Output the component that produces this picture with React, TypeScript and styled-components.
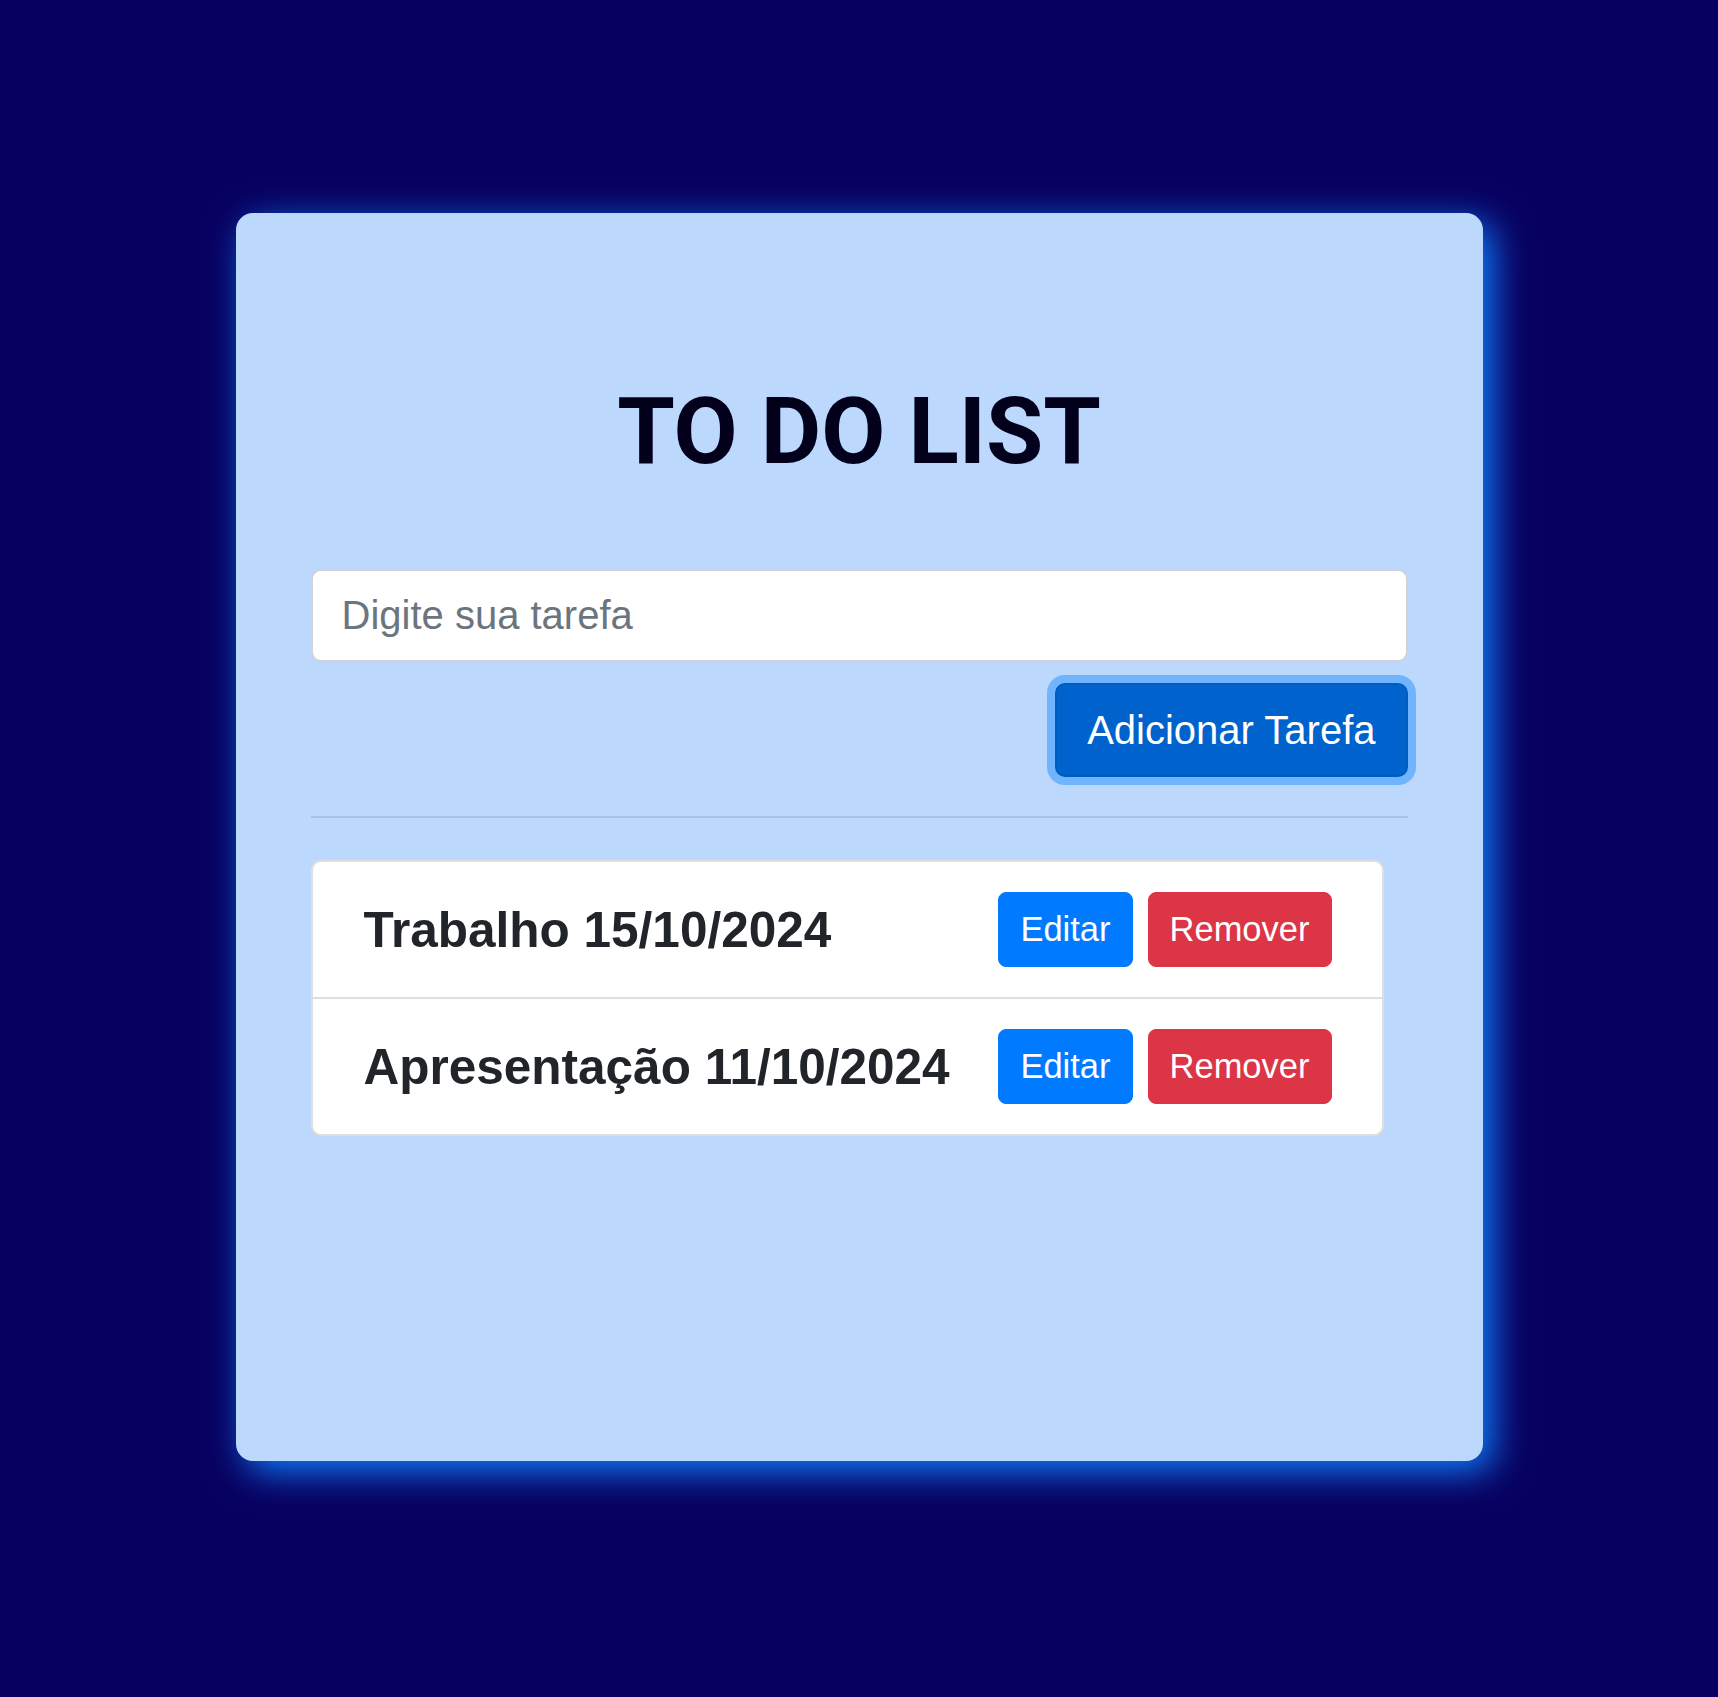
import React from "react";
import styled, { createGlobalStyle } from "styled-components";

const GlobalStyle = createGlobalStyle`
  html, body {
    margin: 0;
    padding: 0;
    background: #080060;
    font-family: "Liberation Sans", Arial, sans-serif;
  }
  * { box-sizing: border-box; }
`;

const Page = styled.main`
  min-height: 1697px;
  display: flex;
  justify-content: center;
  align-items: flex-start;
  padding-top: 213px;
  background: #080060;
`;

const Card = styled.section`
  width: 1247px;
  height: 1248px;
  background: #bcd8fd;
  border-radius: 17px;
  box-shadow: 10px 10px 36px #1080ff;
  padding: 163px 75px 0;
  display: flex;
  flex-direction: column;
`;

const Title = styled.h1`
  margin: 0;
  font-family: Roboto, "Liberation Sans", sans-serif;
  font-weight: 700;
  font-size: 93px;
  line-height: 112px;
  color: #03001c;
  text-align: center;
`;

const TaskInput = styled.input`
  margin-top: 81px;
  width: 100%;
  height: 93px;
  padding: 0 29px;
  border: 2px solid #ced4da;
  border-radius: 10px;
  background: #ffffff;
  font-family: "Liberation Sans", Arial, sans-serif;
  font-size: 40px;
  color: #495057;
  outline: none;
  &::placeholder {
    color: #6c757d;
  }
`;

const Actions = styled.div`
  display: flex;
  justify-content: flex-end;
  margin-top: 21px;
`;

const AddButton = styled.button`
  height: 94px;
  padding: 0 30px;
  border: 2px solid #005cbf;
  border-radius: 10px;
  background: #0062cc;
  color: #ffffff;
  font-family: "Liberation Sans", Arial, sans-serif;
  font-size: 40px;
  box-shadow: 0 0 0 8px rgba(38, 143, 255, 0.5);
  cursor: pointer;
`;

const Divider = styled.hr`
  margin: 39px 0 42px;
  border: 0;
  height: 2px;
  background: rgba(0, 0, 0, 0.1);
`;

const TaskList = styled.ul`
  width: 1073px;
  margin: 0;
  padding: 0;
  list-style: none;
  background: #ffffff;
  border: 2px solid rgba(0, 0, 0, 0.125);
  border-radius: 10px;
  overflow: hidden;
`;

const TaskItem = styled.li`
  display: flex;
  align-items: center;
  justify-content: space-between;
  padding: 30px 50px 30px 51px;
  & + & {
    border-top: 2px solid rgba(0, 0, 0, 0.125);
  }
`;

const TaskName = styled.span`
  font-family: "Liberation Sans", Arial, sans-serif;
  font-weight: 700;
  font-size: 49.5px;
  color: #212529;
`;

const ItemActions = styled.div`
  display: flex;
  gap: 15px;
`;

const SmallButton = styled.button<{ $variant: "primary" | "danger" }>`
  height: 75px;
  padding: 0 21px;
  border: 1px solid ${(p) => (p.$variant === "primary" ? "#007bff" : "#dc3545")};
  border-radius: 8px;
  background: ${(p) => (p.$variant === "primary" ? "#007bff" : "#dc3545")};
  color: #ffffff;
  font-family: "Liberation Sans", Arial, sans-serif;
  font-size: 34.5px;
  cursor: pointer;
`;

const tasks = ["Trabalho 15/10/2024", "Apresentação 11/10/2024"];

export default function App() {
  return (
    <>
      <GlobalStyle />
      <Page>
        <Card>
          <Title>TO DO LIST</Title>
          <TaskInput type="text" placeholder="Digite sua tarefa" />
          <Actions>
            <AddButton>Adicionar Tarefa</AddButton>
          </Actions>
          <Divider />
          <TaskList>
            {tasks.map((t) => (
              <TaskItem key={t}>
                <TaskName>{t}</TaskName>
                <ItemActions>
                  <SmallButton $variant="primary">Editar</SmallButton>
                  <SmallButton $variant="danger">Remover</SmallButton>
                </ItemActions>
              </TaskItem>
            ))}
          </TaskList>
        </Card>
      </Page>
    </>
  );
}
